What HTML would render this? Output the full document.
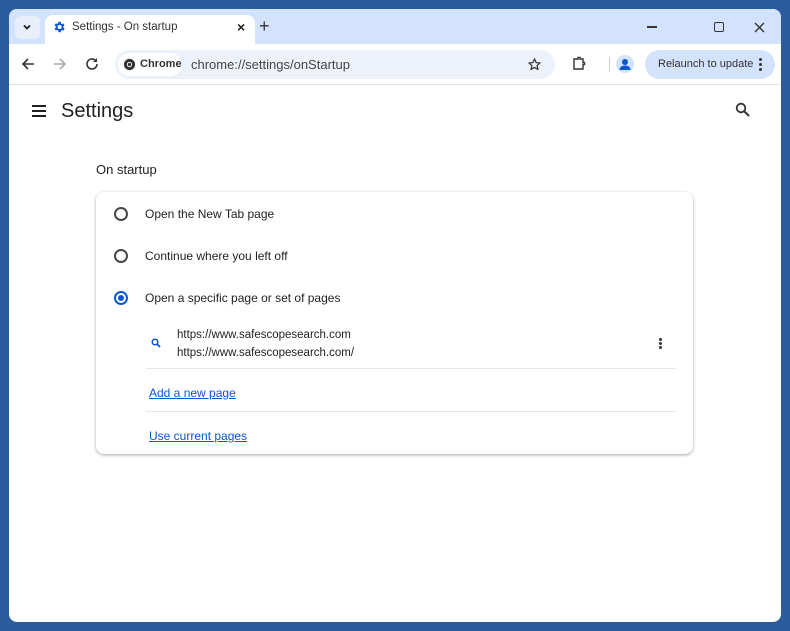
<!DOCTYPE html>
<html><head><meta charset="utf-8"><style>
*{margin:0;padding:0;box-sizing:border-box}
body{width:790px;height:631px;background:#2a5c9e;font-family:"Liberation Sans",sans-serif;position:relative;overflow:hidden}
.win{position:absolute;left:9px;top:9px;width:772px;height:613px;background:#fff;border-radius:8px;overflow:hidden}
.strip{position:absolute;left:0;top:0;width:772px;height:35px;background:#d3e3fd}
.tab{position:absolute;left:36px;top:6px;width:210px;height:34px;background:#fff;border-radius:8px 8px 0 0}
.abs{position:absolute}
.toolbar{position:absolute;left:0;top:35px;width:772px;height:41px;background:#fff;border-bottom:1px solid #e3e3e3}
.omni{position:absolute;left:106px;top:6px;width:440px;height:29px;background:#edf2fa;border-radius:15px}
.card{position:absolute;left:87px;top:183px;width:597px;height:262px;background:#fff;border-radius:8px;box-shadow:0 1px 3px rgba(0,0,0,.35)}
.t{position:absolute;font-size:12px;color:#1f1f1f;white-space:nowrap}
.radio{position:absolute;width:14px;height:14px;border:2px solid #474747;border-radius:50%}
a{color:#0b57d0;text-decoration:underline}
</style></head><body>
<div class="win">
<div class="strip"></div>
<div class="abs" style="left:6px;top:7px;width:25px;height:23px;background:#e8effb;border-radius:6px"></div>
<svg class="abs" style="left:12px;top:12px" width="12" height="12"><path d="M3 4.5l3 3 3-3" stroke="#1f1f1f" stroke-width="1.8" fill="none"/></svg>
<div class="tab"></div>
<svg class="abs" style="left:43px;top:11px" width="14" height="14" viewBox="0 0 24 24"><path fill="#0b57d0" d="M19.4 13a7.5 7.5 0 000-2l2.1-1.6-2-3.5-2.5 1a7 7 0 00-1.7-1L15 3h-4l-.4 2.7a7 7 0 00-1.7 1l-2.5-1-2 3.5L6.5 11a7.5 7.5 0 000 2l-2.1 1.6 2 3.5 2.5-1a7 7 0 001.7 1L11 21h4l.4-2.7a7 7 0 001.7-1l2.5 1 2-3.5zM13 15.5A3.5 3.5 0 1113 8.5a3.5 3.5 0 010 7z"/></svg>
<div class="t" style="left:63px;top:12px;font-size:11.5px;color:#333">Settings - On startup</div>
<div class="t" style="left:228px;top:10px;font-size:14px;font-weight:bold">×</div>
<div class="t" style="left:250px;top:7px;font-size:18px;color:#333">+</div>
<div class="abs" style="left:638px;top:17px;width:10px;height:1.5px;background:#333"></div>
<div class="abs" style="left:705px;top:13px;width:10px;height:10px;border:1.5px solid #333;border-radius:2px"></div>
<svg class="abs" style="left:745px;top:13px" width="11" height="11"><path d="M1 1l9 9M10 1l-9 9" stroke="#333" stroke-width="1.4"/></svg>
<div class="toolbar">
<svg class="abs" style="left:12px;top:13px" width="14" height="14"><path d="M13 7H2M7 2L2 7l5 5" stroke="#333" stroke-width="1.6" fill="none"/></svg>
<svg class="abs" style="left:44px;top:13px" width="14" height="14"><path d="M1 7h11M7 2l5 5-5 5" stroke="#aaa" stroke-width="1.6" fill="none"/></svg>
<svg class="abs" style="left:76px;top:13px" width="14" height="14"><path d="M12 7a5 5 0 11-1.5-3.6" stroke="#333" stroke-width="1.6" fill="none"/><path d="M12 1v4H8" fill="#333"/></svg>
<div class="omni">
<div class="abs" style="left:3px;top:3px;width:64px;height:23px;background:#fff;border-radius:12px"></div>
<svg class="abs" style="left:8px;top:8px" width="13" height="13" viewBox="0 0 14 14"><circle cx="7" cy="7" r="6" fill="#333"/><circle cx="7" cy="7" r="2.8" fill="#fff"/><circle cx="7" cy="7" r="1.8" fill="#333"/></svg>
<div class="t" style="left:25px;top:8px;font-size:11px;font-weight:bold;color:#333">Chrome</div>
<div class="t" style="left:76px;top:7px;font-size:13px;color:#444">chrome://settings/onStartup</div>
<svg class="abs" style="left:412px;top:7px" width="15" height="15" viewBox="0 0 24 24"><path d="M12 3l2.6 6 6.4.5-4.9 4.2 1.5 6.3L12 16.7 6.4 20l1.5-6.3L3 9.5 9.4 9z" stroke="#333" stroke-width="2" fill="none" stroke-linejoin="round"/></svg>
</div>
<svg class="abs" style="left:562px;top:12px" width="16" height="16"><path d="M3 3h4V1.5h2V3h3v3.5h1.5v2H12V13H3z" stroke="#333" stroke-width="1.4" fill="none"/></svg>
<div class="abs" style="left:600px;top:14px;width:1px;height:14px;background:#ccc"></div>
<div class="abs" style="left:607px;top:11px;width:18px;height:18px;border-radius:50%;background:#d3e3fd"></div>
<svg class="abs" style="left:607px;top:11px" width="18" height="18"><circle cx="9" cy="7" r="3" fill="#0b57d0"/><path d="M3.5 15c0-3 2.5-4.5 5.5-4.5s5.5 1.5 5.5 4.5z" fill="#0b57d0"/></svg>
<div class="abs" style="left:636px;top:6px;width:130px;height:29px;background:#d3e3fd;border-radius:15px"></div>
<div class="t" style="left:649px;top:14px;font-size:11px;color:#333">Relaunch to update</div>
<div class="abs" style="left:750px;top:14px;width:3px;height:3px;background:#333;border-radius:50%;box-shadow:0 5px 0 #333,0 10px 0 #333"></div>
</div>
<div class="abs" style="left:23px;top:96px;width:14px;height:2px;background:#1f1f1f;box-shadow:0 5px 0 #1f1f1f,0 10px 0 #1f1f1f"></div>
<div class="t" style="left:52px;top:91px;font-size:20px">Settings</div>
<svg class="abs" style="left:726px;top:93px" width="16" height="16"><circle cx="6" cy="6" r="4.3" stroke="#333" stroke-width="1.8" fill="none"/><path d="M9 9l5 5" stroke="#333" stroke-width="2"/></svg>
<div class="t" style="left:87px;top:153px;font-size:13px">On startup</div>
<div class="card">
<div class="radio" style="left:18px;top:15px"></div>
<div class="t" style="left:49px;top:15px">Open the New Tab page</div>
<div class="radio" style="left:18px;top:57px"></div>
<div class="t" style="left:49px;top:57px">Continue where you left off</div>
<div class="radio" style="left:18px;top:99px;border-color:#0b57d0"><div style="position:absolute;left:2px;top:2px;width:6px;height:6px;border-radius:50%;background:#0b57d0"></div></div>
<div class="t" style="left:49px;top:99px">Open a specific page or set of pages</div>
<svg class="abs" style="left:55px;top:146px" width="10" height="10"><circle cx="4" cy="4" r="2.8" stroke="#0b57d0" stroke-width="1.5" fill="none"/><path d="M6 6l3 3" stroke="#0b57d0" stroke-width="1.8"/></svg>
<div class="t" style="left:81px;top:137px;font-size:11.5px">https://www.safescopesearch.com</div>
<div class="t" style="left:81px;top:155px;font-size:11.5px">https://www.safescopesearch.com/</div>
<div class="abs" style="left:563px;top:146px;width:3px;height:3px;background:#333;border-radius:50%;box-shadow:0 4px 0 #333,0 8px 0 #333"></div>
<div class="abs" style="left:50px;top:176px;width:530px;height:1px;background:#e6e6e6"></div>
<div class="t" style="left:53px;top:194px"><a>Add a new page</a></div>
<div class="abs" style="left:50px;top:219px;width:530px;height:1px;background:#e6e6e6"></div>
<div class="t" style="left:53px;top:237px"><a>Use current pages</a></div>
</div>
</div>
</body></html>
